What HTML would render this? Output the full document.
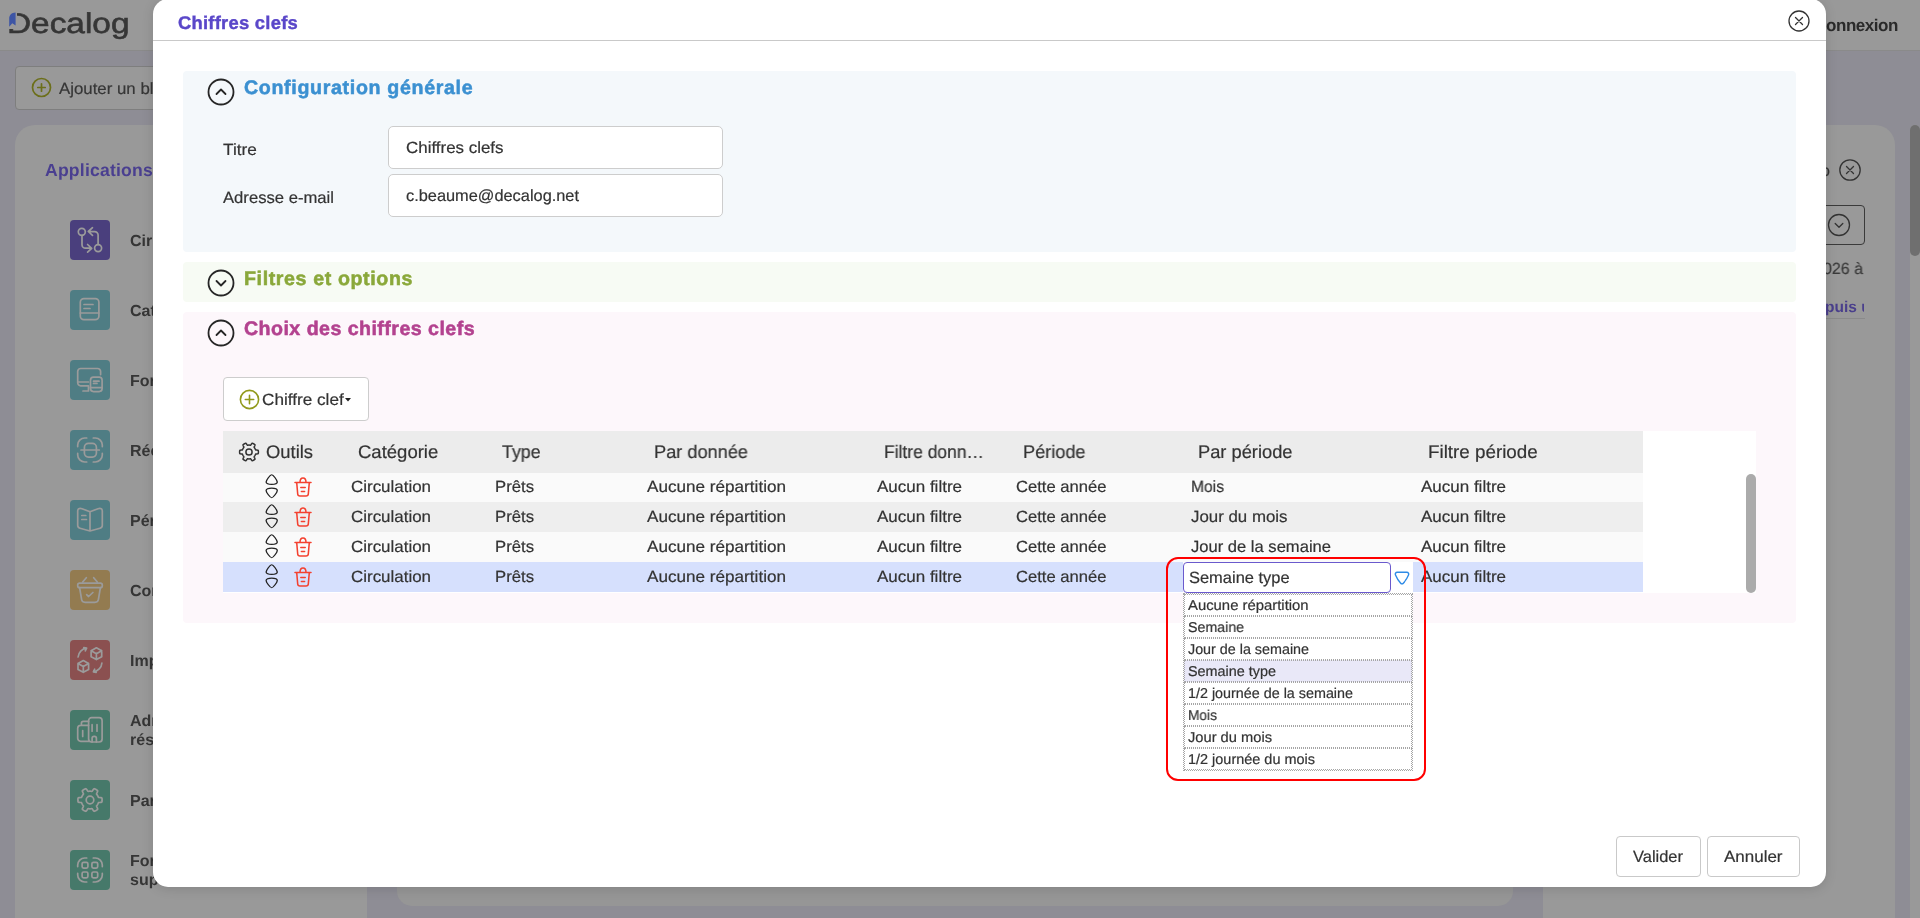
<!DOCTYPE html>
<html lang="fr"><head><meta charset="utf-8"><title>Chiffres clefs</title>
<style>
html,body{margin:0;padding:0;overflow:hidden}
html{width:1920px;height:918px}
body{width:1920px;height:918px;overflow:hidden;position:relative;background:#8e8d95;font-family:"Liberation Sans", sans-serif;}
.abs{position:absolute;display:block}
.t{position:absolute;white-space:nowrap;line-height:1;display:block;will-change:transform;text-rendering:geometricPrecision;-webkit-text-stroke:0.2px currentColor}
.sq{position:absolute;left:70px;width:40px;height:40px;border-radius:4px;display:flex;align-items:center;justify-content:center}
.box{position:absolute;box-sizing:border-box}
</style></head><body>
<!-- background page (dimmed) -->
<div class="abs" style="left:0;top:0;width:1920px;height:50px;background:#999999;border-bottom:1px solid #8a8a8a"></div>
<span class="t" style="left:7.30px;top:8.00px;line-height:32px;font-size:28.5px;font-weight:400;color:#363636;transform-origin:0 0;transform:scaleX(1.1714);-webkit-text-stroke:0.6px #363636;">Decalog</span>
<div class="abs" style="left:7px;top:9px;width:9.800px;height:19.500px;background:#999999"></div>
<svg class="abs" style="left:8px;top:11px" width="10" height="18" viewBox="0 0 10 18"><path d="M7.600 1.500C3.500 1.800 1.200 4 1.200 7.500V15.700L4.300 12.300 7.600 14.600z" fill="#3d55a5"/></svg>
<span class="t" style="left:1826.00px;top:16.00px;line-height:19px;font-size:17px;font-weight:700;color:#2a2a2a;letter-spacing:-0.445px;-webkit-text-stroke:0;">onnexion</span>
<div class="box" style="left:15px;top:66px;width:300px;height:43.500px;border:1px solid #7e7e7e;border-radius:4px;background:#999999"></div>
<svg class="abs" style="left:31.400px;top:77.400px" width="21" height="21" viewBox="-10.500 -10.500 21 21" fill="none" stroke="#6c6f1a" stroke-width="1.700" stroke-linecap="round"><circle r="9"/><path d="M-3.700 0h7.400M0 -3.700v7.400"/></svg>
<span class="t" style="left:58.70px;top:80.00px;line-height:18px;font-size:16.25px;font-weight:400;color:#363636;transform-origin:0 0;transform:scaleX(1.0356);">Ajouter un bl</span>
<div class="abs" style="left:15px;top:125px;width:352px;height:793px;background:#999999;border-radius:20px 20px 0 0"></div>
<div class="abs" style="left:397px;top:100px;width:1116px;height:805.500px;background:#969696;border-radius:15px"></div>
<div class="abs" style="left:1543px;top:125px;width:352px;height:793px;background:#999999;border-radius:20px 20px 0 0"></div>
<div class="abs" style="left:1910px;top:125px;width:10px;height:793px;background:#999999;border-radius:5px 5px 0 0"></div>
<div class="abs" style="left:1910px;top:125px;width:10px;height:131px;background:#6f6f6f;border-radius:5px"></div>
<span class="t" style="left:45.40px;top:160.00px;line-height:20px;font-size:17.6px;font-weight:700;color:#4a3f90;letter-spacing:0.202px;-webkit-text-stroke:0;">Applications</span>
<div class="sq" style="top:220px;background:#4a3f7d"><svg viewBox="0 0 40 40" width="40" height="40" fill="none" stroke="#9b9b9b" stroke-width="1.700" stroke-linecap="round" stroke-linejoin="round"><circle cx="11.800" cy="11.800" r="3.500"/><circle cx="28.100" cy="28.100" r="3.500"/><path d="M12 15.400V24.700a3.500 3.500 0 0 0 3.500 3.500H21.300M17.600 24.500 21.700 28.300 17.600 32.200"/><path d="M28.100 24.500V15.100a3.500 3.500 0 0 0-3.500-3.500H18.800M22.500 7.700 18.300 11.500 22.500 15.400"/></svg></div><span class="t" style="left:130.00px;top:233.00px;line-height:17px;font-size:16px;font-weight:700;color:#363636;letter-spacing:0.000px;-webkit-text-stroke:0;">Cir</span><div class="sq" style="top:290px;background:#4f7d84"><svg viewBox="0 0 40 40" width="40" height="40" fill="none" stroke="#9b9b9b" stroke-width="1.700" stroke-linecap="round" stroke-linejoin="round"><rect x="10.300" y="8.600" width="18.600" height="21.100" rx="3.600"/><path d="M10.300 23h18.600M14 14.500h9M14 18.500h6"/></svg></div><span class="t" style="left:130.00px;top:303.00px;line-height:17px;font-size:16px;font-weight:700;color:#363636;letter-spacing:0.000px;-webkit-text-stroke:0;">Cat</span><div class="sq" style="top:360px;background:#4f7d84"><svg viewBox="0 0 40 40" width="40" height="40" fill="none" stroke="#9b9b9b" stroke-width="1.700" stroke-linecap="round" stroke-linejoin="round"><path d="M30.600 14.600V11.500a3 3 0 0 0-3-3H10.700a3 3 0 0 0-3 3V22.800a3 3 0 0 0 3 3H18.500M7.700 22H18.500M18.500 25.800V31H13"/><rect x="20.500" y="17.200" width="11.600" height="14.400" rx="3"/><path d="M23.500 21.200h5.500M23.500 23.400h3.500M20.500 27.700h11.600"/></svg></div><span class="t" style="left:130.00px;top:373.00px;line-height:17px;font-size:16px;font-weight:700;color:#363636;letter-spacing:0.000px;-webkit-text-stroke:0;">For</span><div class="sq" style="top:430px;background:#4f7d84"><svg viewBox="0 0 40 40" width="40" height="40" fill="none" stroke="#9b9b9b" stroke-width="1.700" stroke-linecap="round" stroke-linejoin="round"><path d="M7.700 16.600V15a7 7 0 0 1 7-7h2M23.300 8h2a7 7 0 0 1 7 7v1.600M32.300 23.400V25a7 7 0 0 1-7 7h-2M16.700 32h-2a7 7 0 0 1-7-7v-1.600"/><rect x="14.400" y="13.400" width="12" height="13.700" rx="4"/><path d="M11 20h18.300"/></svg></div><span class="t" style="left:130.00px;top:443.00px;line-height:17px;font-size:16px;font-weight:700;color:#363636;letter-spacing:0.000px;-webkit-text-stroke:0;">Réc</span><div class="sq" style="top:500px;background:#4f7d84"><svg viewBox="0 0 40 40" width="40" height="40" fill="none" stroke="#9b9b9b" stroke-width="1.700" stroke-linecap="round" stroke-linejoin="round"><path d="M20 11.800 12 8.700Q7.700 7.600 7.700 11V25.600Q7.700 27.600 10 28.200L20 31l10-2.800Q32.300 27.600 32.300 25.600V11Q32.300 7.600 28 8.700ZM20 11.800V31M11.800 15.500h4M11.800 19.500h4.700"/></svg></div><span class="t" style="left:130.00px;top:513.00px;line-height:17px;font-size:16px;font-weight:700;color:#363636;letter-spacing:0.000px;-webkit-text-stroke:0;">Pér</span><div class="sq" style="top:570px;background:#937b50"><svg viewBox="0 0 40 40" width="40" height="40" fill="none" stroke="#9b9b9b" stroke-width="1.700" stroke-linecap="round" stroke-linejoin="round"><path d="M16.300 7.700 12.700 12M23.700 7.700 27.300 12"/><rect x="7.700" y="13.100" width="24.600" height="4.600" rx="2"/><path d="M9.600 17.700 11.600 29.500Q12 32.300 15 32.300H25Q28 32.300 28.400 29.500L30.400 17.700M16.600 24.700l2 1.800 4.300-4"/></svg></div><span class="t" style="left:130.00px;top:583.00px;line-height:17px;font-size:16px;font-weight:700;color:#363636;letter-spacing:0.000px;-webkit-text-stroke:0;">Cor</span><div class="sq" style="top:640px;background:#8b5050"><svg viewBox="0 0 40 40" width="40" height="40" fill="none" stroke="#9b9b9b" stroke-width="1.700" stroke-linecap="round" stroke-linejoin="round"><path d="M26.400 7.800 31.700 10.700v6L26.400 19.600 21.100 16.700v-6zM21.100 10.700l5.300 3 5.300-3M26.400 13.700v5.900"/><path d="M13.300 20.500 18.600 23.400v6L13.300 32.300 8 29.400v-6zM8 23.400l5.300 3 5.300-3M13.300 26.400v5.900"/><path d="M8.100 17A9.500 9.500 0 0 1 16.600 8.200M16.600 8.200 13.800 7.600M16.600 8.200 15.300 10.800M31.900 23A9.500 9.500 0 0 1 23.400 31.800M23.400 31.800 26.200 32.400M23.400 31.800 24.700 29.200"/></svg></div><span class="t" style="left:130.00px;top:653.00px;line-height:17px;font-size:16px;font-weight:700;color:#363636;letter-spacing:0.000px;-webkit-text-stroke:0;">Imp</span><div class="sq" style="top:710px;background:#46796a"><svg viewBox="0 0 40 40" width="40" height="40" fill="none" stroke="#9b9b9b" stroke-width="1.700" stroke-linecap="round" stroke-linejoin="round"><rect x="18.600" y="7.700" width="13.500" height="24.300" rx="3"/><path d="M18.600 31.300H10.700a3 3 0 0 1-3-3V18.300a3 3 0 0 1 3-3H18.600M11.400 15.300V13.400a2 2 0 0 1 2-2H18.600M22.100 14.700v6.500M27 14.700v6.500M12.700 20.500v5.900M22.100 32V28.400a2 2 0 0 1 2-2h.300a2 2 0 0 1 2 2V32"/></svg></div><span class="t" style="left:130.00px;top:713.00px;line-height:17px;font-size:16px;font-weight:700;color:#363636;letter-spacing:0.000px;-webkit-text-stroke:0;">Adr</span><span class="t" style="left:130.00px;top:732.00px;line-height:17px;font-size:16px;font-weight:700;color:#363636;letter-spacing:0.000px;-webkit-text-stroke:0;">rés</span><div class="sq" style="top:780px;background:#46796a"><svg viewBox="0 0 40 40" width="40" height="40" fill="none" stroke="#9b9b9b" stroke-width="1.700" stroke-linecap="round" stroke-linejoin="round"><circle cx="20" cy="20" r="3.800"/><path d="M32.10 20.00 L32.10 20.32 L32.08 20.63 L32.06 20.95 L32.03 21.26 L32.00 21.58 L31.95 21.89 L31.66 22.16 L31.00 22.34 L30.16 22.44 L29.33 22.50 L28.67 22.57 L28.37 22.72 L28.30 22.94 L28.22 23.15 L28.13 23.37 L28.04 23.58 L27.94 23.79 L27.84 24.00 L27.73 24.20 L27.62 24.40 L27.50 24.60 L27.38 24.79 L27.25 24.98 L27.12 25.17 L26.98 25.36 L26.84 25.54 L26.69 25.72 L26.54 25.89 L26.56 26.23 L26.83 26.83 L27.19 27.58 L27.52 28.36 L27.70 29.02 L27.61 29.40 L27.37 29.60 L27.11 29.79 L26.85 29.97 L26.59 30.15 L26.32 30.32 L26.05 30.48 L25.77 30.63 L25.49 30.78 L25.21 30.92 L24.92 31.05 L24.63 31.18 L24.34 31.30 L23.96 31.18 L23.47 30.69 L22.97 30.02 L22.50 29.33 L22.11 28.79 L21.83 28.61 L21.60 28.65 L21.38 28.69 L21.15 28.72 L20.92 28.75 L20.69 28.77 L20.46 28.79 L20.23 28.80 L20.00 28.80 L19.77 28.80 L19.54 28.79 L19.31 28.77 L19.08 28.75 L18.85 28.72 L18.62 28.69 L18.40 28.65 L18.17 28.61 L17.89 28.79 L17.50 29.33 L17.03 30.02 L16.53 30.69 L16.04 31.18 L15.66 31.30 L15.37 31.18 L15.08 31.05 L14.79 30.92 L14.51 30.78 L14.23 30.63 L13.95 30.48 L13.68 30.32 L13.41 30.15 L13.15 29.97 L12.89 29.79 L12.63 29.60 L12.39 29.40 L12.30 29.02 L12.48 28.36 L12.81 27.58 L13.17 26.83 L13.44 26.23 L13.46 25.89 L13.31 25.72 L13.16 25.54 L13.02 25.36 L12.88 25.17 L12.75 24.98 L12.62 24.79 L12.50 24.60 L12.38 24.40 L12.27 24.20 L12.16 24.00 L12.06 23.79 L11.96 23.58 L11.87 23.37 L11.78 23.15 L11.70 22.94 L11.63 22.72 L11.33 22.57 L10.67 22.50 L9.84 22.44 L9.00 22.34 L8.34 22.16 L8.05 21.89 L8.00 21.58 L7.97 21.26 L7.94 20.95 L7.92 20.63 L7.90 20.32 L7.90 20.00 L7.90 19.68 L7.92 19.37 L7.94 19.05 L7.97 18.74 L8.00 18.42 L8.05 18.11 L8.34 17.84 L9.00 17.66 L9.84 17.56 L10.67 17.50 L11.33 17.43 L11.63 17.28 L11.70 17.06 L11.78 16.85 L11.87 16.63 L11.96 16.42 L12.06 16.21 L12.16 16.00 L12.27 15.80 L12.38 15.60 L12.50 15.40 L12.62 15.21 L12.75 15.02 L12.88 14.83 L13.02 14.64 L13.16 14.46 L13.31 14.28 L13.46 14.11 L13.44 13.77 L13.17 13.17 L12.81 12.42 L12.48 11.64 L12.30 10.98 L12.39 10.60 L12.63 10.40 L12.89 10.21 L13.15 10.03 L13.41 9.85 L13.68 9.68 L13.95 9.52 L14.23 9.37 L14.51 9.22 L14.79 9.08 L15.08 8.95 L15.37 8.82 L15.66 8.70 L16.04 8.82 L16.53 9.31 L17.03 9.98 L17.50 10.67 L17.89 11.21 L18.17 11.39 L18.40 11.35 L18.62 11.31 L18.85 11.28 L19.08 11.25 L19.31 11.23 L19.54 11.21 L19.77 11.20 L20.00 11.20 L20.23 11.20 L20.46 11.21 L20.69 11.23 L20.92 11.25 L21.15 11.28 L21.38 11.31 L21.60 11.35 L21.83 11.39 L22.11 11.21 L22.50 10.67 L22.97 9.98 L23.47 9.31 L23.96 8.82 L24.34 8.70 L24.63 8.82 L24.92 8.95 L25.21 9.08 L25.49 9.22 L25.77 9.37 L26.05 9.52 L26.32 9.68 L26.59 9.85 L26.85 10.03 L27.11 10.21 L27.37 10.40 L27.61 10.60 L27.70 10.98 L27.52 11.64 L27.19 12.42 L26.83 13.17 L26.56 13.77 L26.54 14.11 L26.69 14.28 L26.84 14.46 L26.98 14.64 L27.12 14.83 L27.25 15.02 L27.38 15.21 L27.50 15.40 L27.62 15.60 L27.73 15.80 L27.84 16.00 L27.94 16.21 L28.04 16.42 L28.13 16.63 L28.22 16.85 L28.30 17.06 L28.37 17.28 L28.67 17.43 L29.33 17.50 L30.16 17.56 L31.00 17.66 L31.66 17.84 L31.95 18.11 L32.00 18.42 L32.03 18.74 L32.06 19.05 L32.08 19.37 L32.10 19.68Z"/></svg></div><span class="t" style="left:130.00px;top:793.00px;line-height:17px;font-size:16px;font-weight:700;color:#363636;letter-spacing:0.000px;-webkit-text-stroke:0;">Par</span><div class="sq" style="top:850px;background:#46796a"><svg viewBox="0 0 40 40" width="40" height="40" fill="none" stroke="#9b9b9b" stroke-width="1.700" stroke-linecap="round" stroke-linejoin="round"><path d="M7.700 16.600V15a7 7 0 0 1 7-7h2M23.300 8h2a7 7 0 0 1 7 7v1.600M32.300 23.400V25a7 7 0 0 1-7 7h-2M16.700 32h-2a7 7 0 0 1-7-7v-1.600"/><rect x="12.100" y="12.300" width="5.800" height="5.800" rx="1.500"/><rect x="21.900" y="12.300" width="5.800" height="5.800" rx="1.500"/><rect x="12.100" y="22" width="5.800" height="5.800" rx="1.500"/><rect x="21.900" y="22" width="5.800" height="5.800" rx="1.500"/></svg></div><span class="t" style="left:130.00px;top:853.00px;line-height:17px;font-size:16px;font-weight:700;color:#363636;letter-spacing:0.000px;-webkit-text-stroke:0;">For</span><span class="t" style="left:130.00px;top:872.00px;line-height:17px;font-size:16px;font-weight:700;color:#363636;letter-spacing:0.000px;-webkit-text-stroke:0;">sup</span>
<span class="t" style="left:1820.50px;top:163.00px;line-height:17px;font-size:16px;font-weight:400;color:#333;letter-spacing:0.000px;">o</span>
<svg class="abs" style="left:1838px;top:158px" width="24" height="24" viewBox="-12 -12 24 24" fill="none" stroke="#333" stroke-width="1.300" stroke-linecap="round"><circle r="10.200"/><path d="M-3.500 -3.500l7 7M3.500 -3.500l-7 7"/></svg>
<div class="box" style="left:1780px;top:205px;width:85px;height:39.500px;border:1px solid #3a3a3a;border-radius:4px"></div>
<svg class="abs" style="left:1827px;top:213px" width="24" height="24" viewBox="-12 -12 24 24" fill="none" stroke="#333" stroke-width="1.300" stroke-linecap="round" stroke-linejoin="round"><circle r="10.500"/><path d="M-3.800 -1.500 0 2.200 3.800 -1.500"/></svg>
<span class="t" style="left:1822.50px;top:260.00px;line-height:18px;font-size:16.25px;font-weight:400;color:#3a3a3a;transform-origin:0 0;transform:scaleX(0.9835);">026 à</span>
<span class="t" style="left:1824.90px;top:299.00px;line-height:17px;font-size:15.5px;font-weight:700;color:#4a3f8c;letter-spacing:0.000px;-webkit-text-stroke:0;overflow:hidden;width:39.100px;">puis u</span>
<div class="abs" style="left:1826px;top:317.500px;width:39px;height:1px;background:#8a8a8a"></div>

<!-- modal -->
<div class="abs" style="left:152.750px;top:-1.500px;width:1673.250px;height:888.500px;background:#fff;border-radius:15px;box-shadow:0 2px 12px rgba(0,0,0,0.13)"></div>
<span class="t" style="left:178.40px;top:12.00px;line-height:21px;font-size:18.4px;font-weight:700;color:#5a47c9;letter-spacing:0.249px;-webkit-text-stroke:0;-webkit-text-stroke:0.4px #5a47c9;">Chiffres clefs</span>
<svg class="abs" style="left:1786.700px;top:8.700px" width="24" height="24" viewBox="-12 -12 24 24" fill="none" stroke="#333" stroke-width="1.300" stroke-linecap="round"><circle r="10"/><path d="M-3.500 -3.500l7 7M3.500 -3.500l-7 7"/></svg>
<div class="abs" style="left:153px;top:40px;width:1673px;height:1px;background:#c9c9c9"></div>

<div class="abs" style="left:183px;top:71px;width:1613px;height:180.500px;background:#f4f8fb;border-radius:4px"></div>
<svg class="abs" style="left:205.9px;top:76.8px" width="30" height="30" viewBox="-15 -15 30 30" fill="none" stroke="#262626" stroke-width="1.800" stroke-linecap="round" stroke-linejoin="round"><circle r="12.500"/><path d="M-4.500 2 0 -2.500 4.500 2"/></svg>
<span class="t" style="left:244.20px;top:77.00px;line-height:22px;font-size:19.6px;font-weight:700;color:#3b90d1;letter-spacing:0.674px;-webkit-text-stroke:0;-webkit-text-stroke:0.55px #3b90d1;">Configuration générale</span>
<span class="t" style="left:223.30px;top:141.00px;line-height:18px;font-size:16.25px;font-weight:400;color:#333;transform-origin:0 0;transform:scaleX(1.0594);">Titre</span>
<div class="box" style="left:388px;top:126px;width:335px;height:42.500px;border:1px solid #cdcdcd;border-radius:5px;background:#fff"></div>
<span class="t" style="left:406.00px;top:139.00px;line-height:18px;font-size:16.25px;font-weight:400;color:#333;transform-origin:0 0;transform:scaleX(1.0414);">Chiffres clefs</span>
<span class="t" style="left:223.30px;top:189.00px;line-height:18px;font-size:16.25px;font-weight:400;color:#333;transform-origin:0 0;transform:scaleX(1.0242);">Adresse e-mail</span>
<div class="box" style="left:388px;top:174px;width:335px;height:42.500px;border:1px solid #cdcdcd;border-radius:5px;background:#fff"></div>
<span class="t" style="left:406.00px;top:187.00px;line-height:18px;font-size:16.25px;font-weight:400;color:#333;transform-origin:0 0;transform:scaleX(1.0065);">c.beaume@decalog.net</span>

<div class="abs" style="left:183px;top:262px;width:1613px;height:40px;background:#f7fbf4;border-radius:4px"></div>
<svg class="abs" style="left:205.9px;top:267.8px" width="30" height="30" viewBox="-15 -15 30 30" fill="none" stroke="#262626" stroke-width="1.800" stroke-linecap="round" stroke-linejoin="round"><circle r="12.500"/><path d="M-4.500 -2 0 2.500 4.500 -2"/></svg>
<span class="t" style="left:244.20px;top:268.00px;line-height:22px;font-size:19.6px;font-weight:700;color:#8aa83a;letter-spacing:0.619px;-webkit-text-stroke:0;-webkit-text-stroke:0.55px #8aa83a;">Filtres et options</span>

<div class="abs" style="left:183px;top:312px;width:1613px;height:310.500px;background:#fdf7fb;border-radius:4px"></div>
<svg class="abs" style="left:205.9px;top:317.7px" width="30" height="30" viewBox="-15 -15 30 30" fill="none" stroke="#262626" stroke-width="1.800" stroke-linecap="round" stroke-linejoin="round"><circle r="12.500"/><path d="M-4.500 2 0 -2.500 4.500 2"/></svg>
<span class="t" style="left:244.20px;top:318.00px;line-height:22px;font-size:19.6px;font-weight:700;color:#b3428f;letter-spacing:0.460px;-webkit-text-stroke:0;-webkit-text-stroke:0.55px #b3428f;">Choix des chiffres clefs</span>

<div class="box" style="left:223px;top:377px;width:145.500px;height:43.500px;border:1px solid #cdcdcd;border-radius:4px;background:#fff"></div>
<svg class="abs" style="left:239.300px;top:388.500px" width="21" height="21" viewBox="-10.500 -10.500 21 21" fill="none" stroke="#929a1c" stroke-width="1.600" stroke-linecap="round"><circle r="9.100"/><path d="M-4.200 0h8.400M0 -4.200v8.400"/></svg>
<span class="t" style="left:261.60px;top:391.00px;line-height:18px;font-size:16.25px;font-weight:400;color:#333;transform-origin:0 0;transform:scaleX(1.0559);">Chiffre clef</span>
<svg class="abs" style="left:344.500px;top:397.500px" width="6" height="4" viewBox="0 0 6 4"><path d="M0 0h6L3 3.500z" fill="#222"/></svg>

<div class="abs" style="left:223px;top:431px;width:1533px;height:161.600px;background:#fff"></div>
<div class="abs" style="left:223px;top:431px;width:1420px;height:41.500px;background:#ececec"></div>
<svg class="abs" style="left:236.900px;top:440.200px" width="24" height="24" viewBox="0 0 24 24" fill="none" stroke="#333" stroke-width="1.500" stroke-linejoin="round"><circle cx="12" cy="12" r="3.100"/><path d="M21.40 12.00 L21.40 12.25 L21.39 12.49 L21.37 12.74 L21.35 12.98 L21.32 13.23 L21.28 13.47 L21.06 13.68 L20.56 13.82 L19.92 13.90 L19.29 13.95 L18.79 14.01 L18.56 14.13 L18.50 14.30 L18.44 14.47 L18.37 14.64 L18.30 14.81 L18.23 14.97 L18.15 15.13 L18.06 15.29 L17.98 15.45 L17.88 15.61 L17.79 15.76 L17.69 15.91 L17.58 16.06 L17.47 16.20 L17.36 16.34 L17.25 16.48 L17.13 16.62 L17.14 16.88 L17.34 17.34 L17.61 17.91 L17.86 18.50 L17.98 19.01 L17.92 19.31 L17.72 19.46 L17.53 19.60 L17.32 19.75 L17.12 19.88 L16.91 20.01 L16.70 20.14 L16.49 20.26 L16.27 20.38 L16.05 20.48 L15.82 20.59 L15.60 20.68 L15.37 20.78 L15.08 20.69 L14.70 20.32 L14.31 19.81 L13.95 19.29 L13.65 18.89 L13.43 18.75 L13.26 18.78 L13.08 18.82 L12.90 18.84 L12.72 18.86 L12.54 18.88 L12.36 18.89 L12.18 18.90 L12.00 18.90 L11.82 18.90 L11.64 18.89 L11.46 18.88 L11.28 18.86 L11.10 18.84 L10.92 18.82 L10.74 18.78 L10.57 18.75 L10.35 18.89 L10.05 19.29 L9.69 19.81 L9.30 20.32 L8.92 20.69 L8.63 20.78 L8.40 20.68 L8.18 20.59 L7.95 20.48 L7.73 20.38 L7.51 20.26 L7.30 20.14 L7.09 20.01 L6.88 19.88 L6.68 19.75 L6.47 19.60 L6.28 19.46 L6.08 19.31 L6.02 19.01 L6.14 18.50 L6.39 17.91 L6.66 17.34 L6.86 16.88 L6.87 16.62 L6.75 16.48 L6.64 16.34 L6.53 16.20 L6.42 16.06 L6.31 15.91 L6.21 15.76 L6.12 15.61 L6.02 15.45 L5.94 15.29 L5.85 15.13 L5.77 14.97 L5.70 14.81 L5.63 14.64 L5.56 14.47 L5.50 14.30 L5.44 14.13 L5.21 14.01 L4.71 13.95 L4.08 13.90 L3.44 13.82 L2.94 13.68 L2.72 13.47 L2.68 13.23 L2.65 12.98 L2.63 12.74 L2.61 12.49 L2.60 12.25 L2.60 12.00 L2.60 11.75 L2.61 11.51 L2.63 11.26 L2.65 11.02 L2.68 10.77 L2.72 10.53 L2.94 10.32 L3.44 10.18 L4.08 10.10 L4.71 10.05 L5.21 9.99 L5.44 9.87 L5.50 9.70 L5.56 9.53 L5.63 9.36 L5.70 9.19 L5.77 9.03 L5.85 8.87 L5.94 8.71 L6.02 8.55 L6.12 8.39 L6.21 8.24 L6.31 8.09 L6.42 7.94 L6.53 7.80 L6.64 7.66 L6.75 7.52 L6.87 7.38 L6.86 7.12 L6.66 6.66 L6.39 6.09 L6.14 5.50 L6.02 4.99 L6.08 4.69 L6.28 4.54 L6.47 4.40 L6.68 4.25 L6.88 4.12 L7.09 3.99 L7.30 3.86 L7.51 3.74 L7.73 3.62 L7.95 3.52 L8.18 3.41 L8.40 3.32 L8.63 3.22 L8.92 3.31 L9.30 3.68 L9.69 4.19 L10.05 4.71 L10.35 5.11 L10.57 5.25 L10.74 5.22 L10.92 5.18 L11.10 5.16 L11.28 5.14 L11.46 5.12 L11.64 5.11 L11.82 5.10 L12.00 5.10 L12.18 5.10 L12.36 5.11 L12.54 5.12 L12.72 5.14 L12.90 5.16 L13.08 5.18 L13.26 5.22 L13.43 5.25 L13.65 5.11 L13.95 4.71 L14.31 4.19 L14.70 3.68 L15.08 3.31 L15.37 3.22 L15.60 3.32 L15.82 3.41 L16.05 3.52 L16.27 3.62 L16.49 3.74 L16.70 3.86 L16.91 3.99 L17.12 4.12 L17.32 4.25 L17.53 4.40 L17.72 4.54 L17.92 4.69 L17.98 4.99 L17.86 5.50 L17.61 6.09 L17.34 6.66 L17.14 7.12 L17.13 7.38 L17.25 7.52 L17.36 7.66 L17.47 7.80 L17.58 7.94 L17.69 8.09 L17.79 8.24 L17.88 8.39 L17.98 8.55 L18.06 8.71 L18.15 8.87 L18.23 9.03 L18.30 9.19 L18.37 9.36 L18.44 9.53 L18.50 9.70 L18.56 9.87 L18.79 9.99 L19.29 10.05 L19.92 10.10 L20.56 10.18 L21.06 10.32 L21.28 10.53 L21.32 10.77 L21.35 11.02 L21.37 11.26 L21.39 11.51 L21.40 11.75Z"/></svg>
<span class="t" style="left:266.00px;top:441.00px;line-height:21px;font-size:18.3px;font-weight:400;color:#333;transform-origin:0 0;transform:scaleX(1.0057);">Outils</span>
<span class="t" style="left:358.40px;top:441.00px;line-height:21px;font-size:18.3px;font-weight:400;color:#333;transform-origin:0 0;transform:scaleX(1.0128);">Catégorie</span>
<span class="t" style="left:502.00px;top:441.00px;line-height:21px;font-size:18.3px;font-weight:400;color:#333;transform-origin:0 0;transform:scaleX(0.9737);">Type</span>
<span class="t" style="left:654.00px;top:441.00px;line-height:21px;font-size:18.3px;font-weight:400;color:#333;transform-origin:0 0;transform:scaleX(0.9944);">Par donnée</span>
<span class="t" style="left:884.40px;top:441.00px;line-height:21px;font-size:18.3px;font-weight:400;color:#333;transform-origin:0 0;transform:scaleX(0.9555);">Filtre donn…</span>
<span class="t" style="left:1023.40px;top:441.00px;line-height:21px;font-size:18.3px;font-weight:400;color:#333;transform-origin:0 0;transform:scaleX(0.9918);">Période</span>
<span class="t" style="left:1198.00px;top:441.00px;line-height:21px;font-size:18.3px;font-weight:400;color:#333;transform-origin:0 0;transform:scaleX(0.9988);">Par période</span>
<span class="t" style="left:1428.30px;top:441.00px;line-height:21px;font-size:18.3px;font-weight:400;color:#333;transform-origin:0 0;transform:scaleX(1.0281);">Filtre période</span>
<div class="abs" style="left:223px;top:472.5px;width:1420px;height:29px;background:#fafafa"></div><svg class="abs" style="left:262.1px;top:473.25px" width="19.400" height="26.500" viewBox="-8 -13 16 26" preserveAspectRatio="none" fill="none" stroke="#222" stroke-width="1.100" stroke-linejoin="round"><path d="M0 -11.300c1.300 0 4.600 5.300 4.600 7.200 0 1.600-1.600 2.300-4.600 2.300s-4.600-.7-4.600-2.300c0-1.900 3.300-7.200 4.600-7.200z"/><path d="M0 11.300c1.300 0 4.600-5.300 4.600-7.200 0-1.600-1.600-2.300-4.600-2.300s-4.600.7-4.600 2.300c0 1.900 3.300 7.200 4.600 7.200z"/></svg><svg class="abs" style="left:292.8px;top:476px" width="20" height="22" viewBox="-10 -11 20 22" fill="none" stroke="#f4402f" stroke-width="1.550" stroke-linecap="round" stroke-linejoin="round"><path d="M-8 -4.500h16M-3 -4.500c0-2.500 1-4.500 3-4.500s3 2 3 4.500M-6.300 -4.500l1 11.500c.1 1.300 1 2 2.300 2h6c1.300 0 2.200-.7 2.300-2l1-11.500M-2.200 .500h4.400M-1.600 4.500h3.200"/></svg><span class="t" style="left:351.20px;top:478.00px;line-height:18px;font-size:16.25px;font-weight:400;color:#333;transform-origin:0 0;transform:scaleX(1.0419);">Circulation</span><span class="t" style="left:495.00px;top:478.00px;line-height:18px;font-size:16.25px;font-weight:400;color:#333;transform-origin:0 0;transform:scaleX(1.0280);">Prêts</span><span class="t" style="left:647.00px;top:478.00px;line-height:18px;font-size:16.25px;font-weight:400;color:#333;transform-origin:0 0;transform:scaleX(1.0539);">Aucune répartition</span><span class="t" style="left:877.00px;top:478.00px;line-height:18px;font-size:16.25px;font-weight:400;color:#333;transform-origin:0 0;transform:scaleX(1.0456);">Aucun filtre</span><span class="t" style="left:1016.00px;top:478.00px;line-height:18px;font-size:16.25px;font-weight:400;color:#333;transform-origin:0 0;transform:scaleX(1.0221);">Cette année</span><span class="t" style="left:1191.00px;top:478.00px;line-height:18px;font-size:16.25px;font-weight:400;color:#333;transform-origin:0 0;transform:scaleX(0.9617);">Mois</span><span class="t" style="left:1421.00px;top:478.00px;line-height:18px;font-size:16.25px;font-weight:400;color:#333;transform-origin:0 0;transform:scaleX(1.0456);">Aucun filtre</span><div class="abs" style="left:223px;top:501.5px;width:1420px;height:30px;background:#eeeeee"></div><svg class="abs" style="left:262.1px;top:503.25px" width="19.400" height="26.500" viewBox="-8 -13 16 26" preserveAspectRatio="none" fill="none" stroke="#222" stroke-width="1.100" stroke-linejoin="round"><path d="M0 -11.300c1.300 0 4.600 5.300 4.600 7.200 0 1.600-1.600 2.300-4.600 2.300s-4.600-.7-4.600-2.300c0-1.900 3.300-7.200 4.600-7.200z"/><path d="M0 11.300c1.300 0 4.600-5.300 4.600-7.200 0-1.600-1.600-2.300-4.600-2.300s-4.600.7-4.600 2.300c0 1.900 3.300 7.200 4.600 7.200z"/></svg><svg class="abs" style="left:292.8px;top:506px" width="20" height="22" viewBox="-10 -11 20 22" fill="none" stroke="#f4402f" stroke-width="1.550" stroke-linecap="round" stroke-linejoin="round"><path d="M-8 -4.500h16M-3 -4.500c0-2.500 1-4.500 3-4.500s3 2 3 4.500M-6.300 -4.500l1 11.500c.1 1.300 1 2 2.300 2h6c1.300 0 2.200-.7 2.300-2l1-11.500M-2.200 .500h4.400M-1.600 4.500h3.200"/></svg><span class="t" style="left:351.20px;top:508.00px;line-height:18px;font-size:16.25px;font-weight:400;color:#333;transform-origin:0 0;transform:scaleX(1.0419);">Circulation</span><span class="t" style="left:495.00px;top:508.00px;line-height:18px;font-size:16.25px;font-weight:400;color:#333;transform-origin:0 0;transform:scaleX(1.0280);">Prêts</span><span class="t" style="left:647.00px;top:508.00px;line-height:18px;font-size:16.25px;font-weight:400;color:#333;transform-origin:0 0;transform:scaleX(1.0539);">Aucune répartition</span><span class="t" style="left:877.00px;top:508.00px;line-height:18px;font-size:16.25px;font-weight:400;color:#333;transform-origin:0 0;transform:scaleX(1.0456);">Aucun filtre</span><span class="t" style="left:1016.00px;top:508.00px;line-height:18px;font-size:16.25px;font-weight:400;color:#333;transform-origin:0 0;transform:scaleX(1.0221);">Cette année</span><span class="t" style="left:1191.00px;top:508.00px;line-height:18px;font-size:16.25px;font-weight:400;color:#333;transform-origin:0 0;transform:scaleX(1.0373);">Jour du mois</span><span class="t" style="left:1421.00px;top:508.00px;line-height:18px;font-size:16.25px;font-weight:400;color:#333;transform-origin:0 0;transform:scaleX(1.0456);">Aucun filtre</span><div class="abs" style="left:223px;top:531.5px;width:1420px;height:30px;background:#fafafa"></div><svg class="abs" style="left:262.1px;top:533.25px" width="19.400" height="26.500" viewBox="-8 -13 16 26" preserveAspectRatio="none" fill="none" stroke="#222" stroke-width="1.100" stroke-linejoin="round"><path d="M0 -11.300c1.300 0 4.600 5.300 4.600 7.200 0 1.600-1.600 2.300-4.600 2.300s-4.600-.7-4.600-2.300c0-1.900 3.300-7.200 4.600-7.200z"/><path d="M0 11.300c1.300 0 4.600-5.300 4.600-7.200 0-1.600-1.600-2.300-4.600-2.300s-4.600.7-4.600 2.300c0 1.900 3.300 7.200 4.600 7.200z"/></svg><svg class="abs" style="left:292.8px;top:536px" width="20" height="22" viewBox="-10 -11 20 22" fill="none" stroke="#f4402f" stroke-width="1.550" stroke-linecap="round" stroke-linejoin="round"><path d="M-8 -4.500h16M-3 -4.500c0-2.500 1-4.500 3-4.500s3 2 3 4.500M-6.300 -4.500l1 11.500c.1 1.300 1 2 2.300 2h6c1.300 0 2.200-.7 2.300-2l1-11.500M-2.200 .500h4.400M-1.600 4.500h3.200"/></svg><span class="t" style="left:351.20px;top:538.00px;line-height:18px;font-size:16.25px;font-weight:400;color:#333;transform-origin:0 0;transform:scaleX(1.0419);">Circulation</span><span class="t" style="left:495.00px;top:538.00px;line-height:18px;font-size:16.25px;font-weight:400;color:#333;transform-origin:0 0;transform:scaleX(1.0280);">Prêts</span><span class="t" style="left:647.00px;top:538.00px;line-height:18px;font-size:16.25px;font-weight:400;color:#333;transform-origin:0 0;transform:scaleX(1.0539);">Aucune répartition</span><span class="t" style="left:877.00px;top:538.00px;line-height:18px;font-size:16.25px;font-weight:400;color:#333;transform-origin:0 0;transform:scaleX(1.0456);">Aucun filtre</span><span class="t" style="left:1016.00px;top:538.00px;line-height:18px;font-size:16.25px;font-weight:400;color:#333;transform-origin:0 0;transform:scaleX(1.0221);">Cette année</span><span class="t" style="left:1191.00px;top:538.00px;line-height:18px;font-size:16.25px;font-weight:400;color:#333;transform-origin:0 0;transform:scaleX(1.0196);">Jour de la semaine</span><span class="t" style="left:1421.00px;top:538.00px;line-height:18px;font-size:16.25px;font-weight:400;color:#333;transform-origin:0 0;transform:scaleX(1.0456);">Aucun filtre</span><div class="abs" style="left:223px;top:561.5px;width:1420px;height:30px;background:#d6e0fd"></div><svg class="abs" style="left:262.1px;top:563.25px" width="19.400" height="26.500" viewBox="-8 -13 16 26" preserveAspectRatio="none" fill="none" stroke="#222" stroke-width="1.100" stroke-linejoin="round"><path d="M0 -11.300c1.300 0 4.600 5.300 4.600 7.200 0 1.600-1.600 2.300-4.600 2.300s-4.600-.7-4.600-2.300c0-1.900 3.300-7.200 4.600-7.200z"/><path d="M0 11.300c1.300 0 4.600-5.300 4.600-7.200 0-1.600-1.600-2.300-4.600-2.300s-4.600.7-4.600 2.300c0 1.900 3.300 7.200 4.600 7.200z"/></svg><svg class="abs" style="left:292.8px;top:566px" width="20" height="22" viewBox="-10 -11 20 22" fill="none" stroke="#f4402f" stroke-width="1.550" stroke-linecap="round" stroke-linejoin="round"><path d="M-8 -4.500h16M-3 -4.500c0-2.500 1-4.500 3-4.500s3 2 3 4.500M-6.300 -4.500l1 11.500c.1 1.300 1 2 2.300 2h6c1.300 0 2.200-.7 2.300-2l1-11.500M-2.200 .500h4.400M-1.600 4.500h3.200"/></svg><span class="t" style="left:351.20px;top:568.00px;line-height:18px;font-size:16.25px;font-weight:400;color:#333;transform-origin:0 0;transform:scaleX(1.0419);">Circulation</span><span class="t" style="left:495.00px;top:568.00px;line-height:18px;font-size:16.25px;font-weight:400;color:#333;transform-origin:0 0;transform:scaleX(1.0280);">Prêts</span><span class="t" style="left:647.00px;top:568.00px;line-height:18px;font-size:16.25px;font-weight:400;color:#333;transform-origin:0 0;transform:scaleX(1.0539);">Aucune répartition</span><span class="t" style="left:877.00px;top:568.00px;line-height:18px;font-size:16.25px;font-weight:400;color:#333;transform-origin:0 0;transform:scaleX(1.0456);">Aucun filtre</span><span class="t" style="left:1016.00px;top:568.00px;line-height:18px;font-size:16.25px;font-weight:400;color:#333;transform-origin:0 0;transform:scaleX(1.0221);">Cette année</span><span class="t" style="left:1421.00px;top:568.00px;line-height:18px;font-size:16.25px;font-weight:400;color:#333;transform-origin:0 0;transform:scaleX(1.0456);">Aucun filtre</span>
<div class="abs" style="left:1746px;top:474px;width:9.700px;height:118.500px;background:#ababab;border-radius:5px"></div>

<!-- editor + dropdown -->
<div class="abs" style="left:1183px;top:561.500px;width:229.500px;height:32px;background:#fff"></div>
<div class="box" style="left:1183px;top:593px;width:230px;height:178px;border:1px dotted #a6a6a6;background:#fff"></div>
<div class="box" style="left:1184px;top:594px;width:228px;height:22px;background:#ffffff;border:1px dotted #a6a6a6"></div><span class="t" style="left:1188.30px;top:598.00px;line-height:16px;font-size:14.25px;font-weight:400;color:#333;transform-origin:0 0;transform:scaleX(1.0427);">Aucune répartition</span><div class="box" style="left:1184px;top:616px;width:228px;height:22px;background:#ffffff;border:1px dotted #a6a6a6"></div><span class="t" style="left:1188.30px;top:620.00px;line-height:16px;font-size:14.25px;font-weight:400;color:#333;transform-origin:0 0;transform:scaleX(0.9956);">Semaine</span><div class="box" style="left:1184px;top:638px;width:228px;height:22px;background:#ffffff;border:1px dotted #a6a6a6"></div><span class="t" style="left:1188.30px;top:642.00px;line-height:16px;font-size:14.25px;font-weight:400;color:#333;transform-origin:0 0;transform:scaleX(1.0049);">Jour de la semaine</span><div class="box" style="left:1184px;top:660px;width:228px;height:22px;background:#e9e8f8;border:1px dotted #a6a6a6"></div><span class="t" style="left:1188.30px;top:664.00px;line-height:16px;font-size:14.25px;font-weight:400;color:#333;transform-origin:0 0;transform:scaleX(1.0099);">Semaine type</span><div class="box" style="left:1184px;top:682px;width:228px;height:22px;background:#ffffff;border:1px dotted #a6a6a6"></div><span class="t" style="left:1188.30px;top:686.00px;line-height:16px;font-size:14.25px;font-weight:400;color:#333;transform-origin:0 0;transform:scaleX(1.0061);">1/2 journée de la semaine</span><div class="box" style="left:1184px;top:704px;width:228px;height:22px;background:#ffffff;border:1px dotted #a6a6a6"></div><span class="t" style="left:1188.30px;top:708.00px;line-height:16px;font-size:14.25px;font-weight:400;color:#333;transform-origin:0 0;transform:scaleX(0.9637);">Mois</span><div class="box" style="left:1184px;top:726px;width:228px;height:22px;background:#ffffff;border:1px dotted #a6a6a6"></div><span class="t" style="left:1188.30px;top:730.00px;line-height:16px;font-size:14.25px;font-weight:400;color:#333;transform-origin:0 0;transform:scaleX(1.0297);">Jour du mois</span><div class="box" style="left:1184px;top:748px;width:228px;height:22px;background:#ffffff;border:1px dotted #a6a6a6"></div><span class="t" style="left:1188.30px;top:752.00px;line-height:16px;font-size:14.25px;font-weight:400;color:#333;transform-origin:0 0;transform:scaleX(1.0146);">1/2 journée du mois</span>
<div class="box" style="left:1183px;top:562px;width:207.500px;height:30.500px;border:1px solid #6a5acd;border-radius:4px;background:#fff"></div>
<span class="t" style="left:1189.00px;top:569.00px;line-height:18px;font-size:16.25px;font-weight:400;color:#333;transform-origin:0 0;transform:scaleX(1.0123);">Semaine type</span>
<svg class="abs" style="left:1394px;top:570px" width="16" height="16" viewBox="0 0 16 16" fill="none" stroke="#2e8be6" stroke-width="1.400" stroke-linejoin="round"><path d="M3.200 2.300h9.600c1.500 0 2.300 1.300 1.700 2.700-1 2.500-3.200 6-5.200 8.300-.7.800-1.900.8-2.600 0C4.700 11 2.500 7.500 1.500 5c-.6-1.400.2-2.700 1.700-2.700z"/></svg>
<div class="box" style="left:1166px;top:557px;width:260px;height:224px;border:2px solid #ff0000;border-radius:12px"></div>

<div class="box" style="left:1616px;top:836px;width:85px;height:40.500px;border:1px solid #c9c9c9;border-radius:4px;background:#fff"></div>
<span class="t" style="left:1633.00px;top:848.00px;line-height:18px;font-size:16.25px;font-weight:400;color:#333;transform-origin:0 0;transform:scaleX(1.0123);">Valider</span>
<div class="box" style="left:1707px;top:836px;width:93px;height:40.500px;border:1px solid #c9c9c9;border-radius:4px;background:#fff"></div>
<span class="t" style="left:1724.00px;top:848.00px;line-height:18px;font-size:16.25px;font-weight:400;color:#333;transform-origin:0 0;transform:scaleX(1.0444);">Annuler</span>
</body></html>
